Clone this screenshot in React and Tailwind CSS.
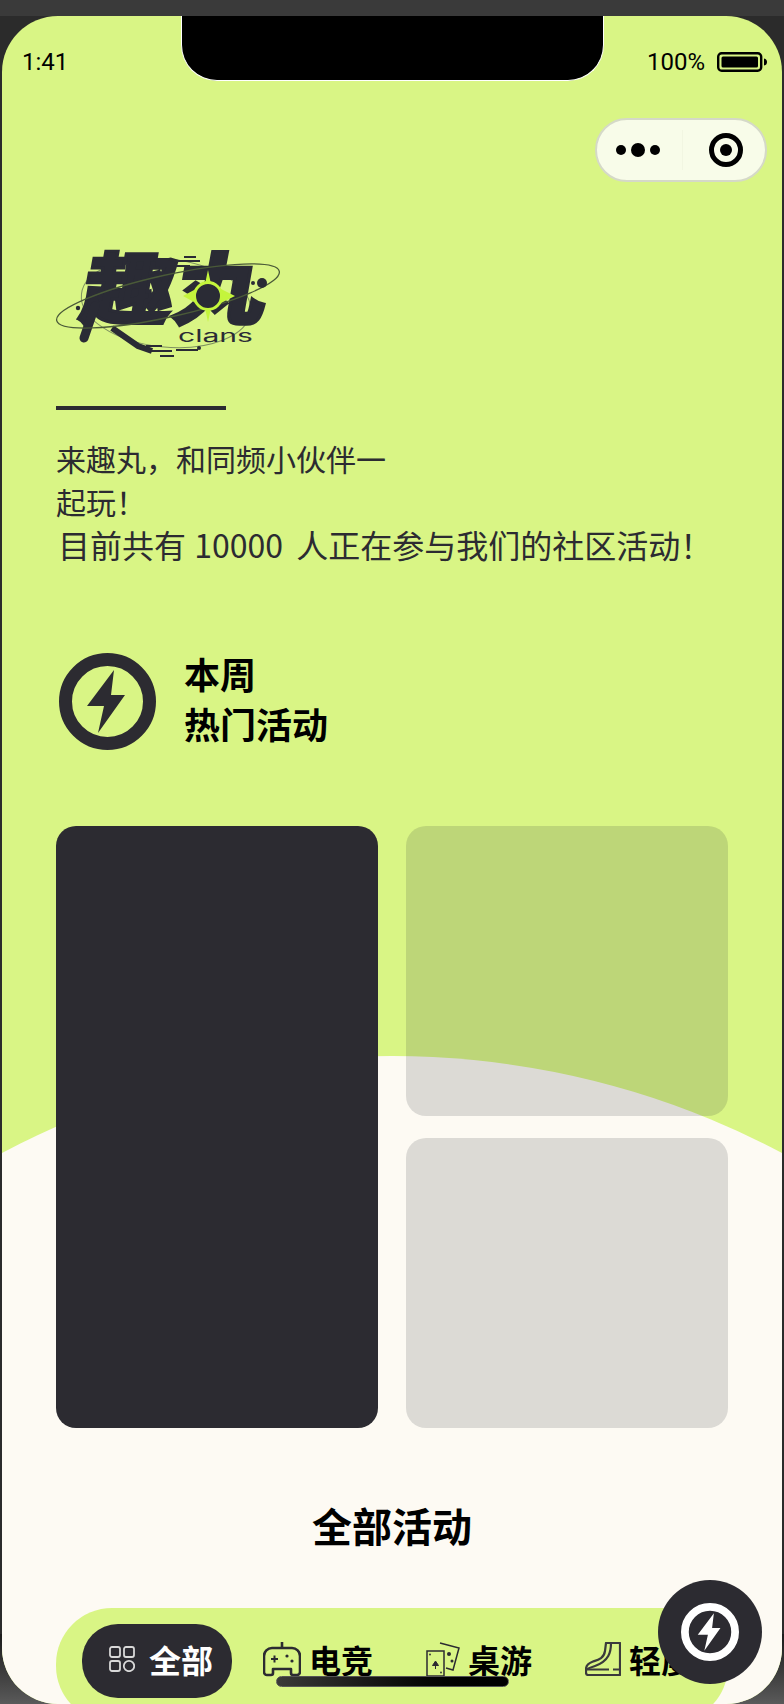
const cjk = "font-['Noto_Sans_CJK_SC','Noto_Sans',sans-serif]";

const BoltIcon = ({ className }) => (
  <svg viewBox="0 0 97 97" className={className}>
    <circle cx="48.5" cy="48.5" r="42" fill="none" stroke="currentColor" strokeWidth="13" />
    <polygon points="55,17 28,53 45,53 39,80 66,42 52,42" fill="currentColor" />
  </svg>
);

const GridIcon = () => (
  <svg viewBox="0 0 26 26" className="h-[26px] w-[26px] shrink-0 text-[#d8d8d8]" fill="none" stroke="currentColor" strokeWidth="1.8">
    <rect x="1" y="1" width="10" height="10" rx="2" />
    <rect x="15" y="1" width="10" height="10" rx="2" />
    <rect x="1" y="15" width="10" height="10" rx="2" />
    <circle cx="20" cy="20" r="5.2" />
  </svg>
);

const PadIcon = () => (
  <svg viewBox="0 0 38 35" className="h-[35px] w-[38px] shrink-0 text-[#2c2b31]" fill="none" stroke="currentColor" strokeWidth="2.6" strokeLinejoin="round">
    <path d="M9 6H29a8 8 0 0 1 8 8V30a3 3 0 0 1-3 3H30a2 2 0 0 1-2-2V27H10V31a2 2 0 0 1-2 2H4a3 3 0 0 1-3-3V14a8 8 0 0 1 8-8Z" />
    <path d="M19 6V0" />
    <path d="M8 17H15M11.500 13.500V20.500" strokeWidth="2" />
    <circle cx="24" cy="14" r="1.600" fill="currentColor" stroke="none" />
    <circle cx="29" cy="19" r="1.600" fill="currentColor" stroke="none" />
  </svg>
);

const CardsIcon = () => (
  <svg viewBox="0 0 34 36" className="h-[36px] w-[34px] shrink-0 text-[#2c2b31]" fill="none" stroke="currentColor" strokeWidth="1.500">
    <rect x="1" y="10" width="17" height="25" />
    <path d="M14 2L33 7L27 29L20 27" />
    <path d="M9.500 20L12.500 24.500H6.500ZM9.500 23V28" fill="currentColor" strokeWidth="1" />
    <circle cx="23" cy="13" r="2" fill="currentColor" stroke="none" />
    <circle cx="26" cy="20" r="1.500" fill="currentColor" stroke="none" />
    <circle cx="4" cy="13.500" r="0.900" fill="currentColor" stroke="none" />
    <circle cx="15" cy="31.500" r="0.900" fill="currentColor" stroke="none" />
  </svg>
);

const BootIcon = () => (
  <svg viewBox="0 0 36 34" className="h-[34px] w-[36px] shrink-0 text-[#3a3a3c]" fill="none" stroke="currentColor" strokeWidth="2.200" strokeLinejoin="round">
    <path d="M21 1H35V33H3C1.500 33 1 32 1 30.500V27C1 23 4 21 8 19.500C14 17.500 19 16 20 9Z" />
    <path d="M26 1C26 10 24 19 10 24C7 25 4 26 1 27.500" />
    <path d="M1 27.500H24M28 27.500H35" />
  </svg>
);

const Logo = () => (
  <svg viewBox="56 240 230 125" className="mt-[58px] h-[125px] w-[230px] overflow-visible">
    <ellipse cx="166" cy="303" rx="85" ry="44" transform="rotate(6 166 303)" fill="none" stroke="#7f9160" strokeWidth="1" />
    <text
      fontFamily="'Noto Sans CJK SC', sans-serif"
      fontWeight="900"
      fontSize="92"
      fill="#2a2b35"
      stroke="#2a2b35"
      strokeWidth="3.500"
      transform="translate(78 318) skewX(-10) scale(1 0.85)"
    >
      趣丸
    </text>
    <path d="M95 306L84 338" fill="none" stroke="#2a2b35" strokeWidth="9" strokeLinecap="round" />
    <path d="M112 328L138 346L152 351" fill="none" stroke="#2a2b35" strokeWidth="6" />
    <g fill="#2a2b35">
      <rect x="184" y="256" width="12" height="2" />
      <rect x="178" y="260" width="22" height="2" />
      <rect x="160" y="265" width="30" height="2" />
      <rect x="146" y="345" width="16" height="2" />
      <rect x="150" y="350" width="22" height="2" />
      <rect x="160" y="355" width="14" height="2" />
      <rect x="176" y="349" width="22" height="2" />
    </g>
    <ellipse cx="168" cy="296" rx="114" ry="21" transform="rotate(-12.500 168 296)" fill="none" stroke="#4a5a38" strokeWidth="1.300" />
    <polygon points="208,270 211,284 235,296 211,308 208,322 205,308 183,296 205,284" fill="#c4f53c" />
    <circle cx="208" cy="296" r="13.500" fill="#2a2b35" stroke="#c4f53c" strokeWidth="3" />
    <circle cx="262" cy="283" r="5" fill="#2a2b35" />
    <circle cx="253" cy="283" r="2" fill="#2a2b35" />
    <circle cx="78" cy="308" r="2.200" fill="#2a2b35" />
    <circle cx="199" cy="348" r="2" fill="#2a2b35" />
    <text x="178" y="342" fontFamily="Inter, sans-serif" fontSize="17" textLength="75" lengthAdjust="spacingAndGlyphs" fill="#2a2b35">clans</text>
  </svg>
);

export default function App() {
  return (
    <div className="relative h-[1704px] w-[784px] overflow-hidden bg-[#2b2b2b]">
      {/* device frame */}
      <div className="absolute inset-x-0 top-0 h-4 bg-[#3a3a3a]" />
      <div className="absolute inset-x-0 bottom-0 h-[70px] bg-gradient-to-b from-[#1c1c1c] to-[#5a5a5a]" />

      <div className={`relative ml-[2px] mt-4 h-[1688px] w-[780px] overflow-hidden rounded-[56px] bg-[#d9f585] ${cjk}`}>
        <div className="absolute left-[-442px] top-[1040px] h-[1664px] w-[1664px] rounded-full bg-[#fdfaf3]" />

        <div className="relative">
          {/* status bar */}
          <div className="flex h-[102px] items-start justify-between pl-5 pr-[13px] pt-[32px] font-['Roboto',sans-serif] text-[24px] leading-[28px] text-black">
            <span>1:41</span>
            <div className="flex items-center gap-3">
              <span>100%</span>
              <svg viewBox="0 0 52 20" className="h-5 w-[52px]">
                <rect x="1.200" y="1.200" width="43" height="17.600" rx="3.500" fill="none" stroke="black" strokeWidth="2.400" />
                <rect x="4.500" y="4.500" width="36.500" height="11" rx="1.500" fill="black" />
                <path d="M47 6.500C49.500 7 50 8.500 50 10S49.500 13 47 13.500Z" fill="black" />
              </svg>
            </div>
          </div>

          {/* wechat capsule */}
          <div className="flex justify-end pr-[15px]">
            <div className="flex h-[64px] w-[172px] items-center rounded-full border-2 border-[#d5d9c8] bg-[#f8fce9]">
              <div className="flex w-[85px] items-center justify-end gap-[5px] pr-[22px]">
                <span className="h-[10px] w-[10px] rounded-full bg-black" />
                <span className="h-[14px] w-[14px] rounded-full bg-black" />
                <span className="h-[10px] w-[10px] rounded-full bg-black" />
              </div>
              <div className="h-[40px] w-px bg-[#f2f6e2]" />
              <div className="ml-[26px] flex h-[34px] w-[34px] items-center justify-center rounded-full border-[5px] border-black">
                <span className="h-3 w-3 rounded-full bg-black" />
              </div>
            </div>
          </div>

          <div className="px-[54px]">
            <Logo />
            <div className="mt-[41px] h-1 w-[170px] bg-[#2c2b31]" />

            <div className="mt-[27px] text-[30px] leading-[43px] text-[#2c2b31]">
              <p className="w-[340px]">来趣丸，和同频小伙伴一起玩！</p>
              <p className="ml-[2px] whitespace-nowrap text-[32px]">
                目前共有 <span className="ml-px mr-[6px]">10000</span> 人正在参与我们的社区活动！
              </p>
            </div>

            <div className="mt-[85px] flex h-[100px] items-center gap-[28px] pl-[3px]">
              <BoltIcon className="h-[97px] w-[97px] text-[#2c2b31]" />
              <h2 className="pb-[6px] text-[36px] font-bold leading-[50px] text-black">
                本周
                <br />
                热门活动
              </h2>
            </div>

            <div className="mt-[75px] grid h-[602px] grid-cols-2 grid-rows-2 gap-x-[28px] gap-y-[22px]">
              <div className="row-span-2 rounded-[20px] bg-[#2c2b31]" />
              <div className="rounded-[20px] bg-[#1f2b2f]/15" />
              <div className="rounded-[20px] bg-[#1f2b2f]/15" />
            </div>

            <h2 className="mt-[69px] text-center text-[40px] font-bold leading-[56px] text-black">全部活动</h2>

            {/* category tabs */}
            <div className="mt-[55px] flex h-[114px] items-start overflow-hidden rounded-[56px] bg-[#d9f585] pl-[26px] pt-4 text-[32px] font-bold leading-none text-black">
              <div className="flex h-[74px] w-[150px] shrink-0 items-center gap-[14px] rounded-[36px] bg-[#2c2b31] pb-1 pl-[27px] text-white">
                <GridIcon />
                <span className="whitespace-nowrap">全部</span>
              </div>
              <div className="ml-[31px] flex h-[74px] shrink-0 items-center gap-2 pb-1">
                <PadIcon />
                <span className="whitespace-nowrap">电竞</span>
              </div>
              <div className="ml-[53px] flex h-[74px] shrink-0 items-center gap-2 pb-1">
                <CardsIcon />
                <span className="whitespace-nowrap">桌游</span>
              </div>
              <div className="ml-[53px] flex h-[74px] shrink-0 items-center gap-2 pb-1">
                <BootIcon />
                <span className="whitespace-nowrap">轻度</span>
              </div>
            </div>
          </div>
        </div>

        {/* notch, home bar and floating button sit over the page */}
        <div className="absolute left-[179px] top-[-2px] h-[67px] w-[423px] rounded-b-[36px] border border-t-0 border-white bg-black" />
        <div className="absolute bottom-[17px] left-[274px] h-[11px] w-[233px] rounded-full border border-[#555] bg-gradient-to-r from-[#3a3a38] to-black" />
        <div className="absolute bottom-5 right-5 flex h-[104px] w-[104px] items-center justify-center rounded-full bg-[#2c2b31]">
          <BoltIcon className="h-[58px] w-[58px] text-white" />
        </div>
      </div>
    </div>
  );
}
